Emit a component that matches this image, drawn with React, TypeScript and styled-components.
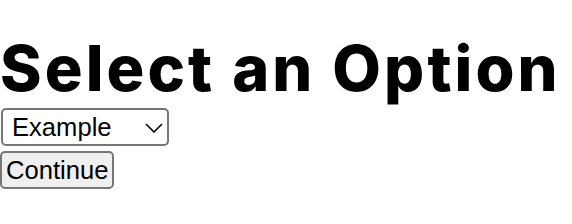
import React from 'react';
import styled, { createGlobalStyle } from 'styled-components';

const GlobalStyle = createGlobalStyle`
  html, body {
    margin: 0;
    padding: 0;
    background: #fff;
  }
`;

const Page = styled.div`
  display: flex;
  flex-direction: column;
  align-items: flex-start;
  padding-top: 36px;
`;

const Title = styled.h1`
  margin: 0 0 8px;
  font-family: Inter, "Liberation Sans", sans-serif;
  font-weight: 800;
  font-size: 63px;
  line-height: 64px;
  letter-spacing: 3.1px;
  color: #000;
`;

const SelectWrap = styled.div`
  position: relative;
  margin-left: 1px;
`;

const Select = styled.select`
  appearance: none;
  display: block;
  box-sizing: border-box;
  width: 168px;
  height: 38px;
  margin: 0;
  padding: 0 30px 0 9px;
  font-family: "Liberation Sans", Arial, sans-serif;
  font-size: 25.6px;
  color: #000;
  background: #fff;
  border: 2px solid #767676;
  border-radius: 5px;
`;

const Chevron = styled.svg`
  position: absolute;
  right: 5px;
  top: 14px;
  width: 20px;
  height: 11px;
  pointer-events: none;
`;

const Button = styled.button`
  margin-top: 5px;
  padding: 2px 4px;
  font-family: "Liberation Sans", Arial, sans-serif;
  font-size: 25.6px;
  line-height: 30px;
  color: #000;
  background: #efefef;
  border: 2px solid #767676;
  border-radius: 5px;
`;

export default function App() {
  return (
    <>
      <GlobalStyle />
      <Page>
        <Title>Select an Option</Title>
        <SelectWrap>
          <Select defaultValue="example">
            <option value="example">Example</option>
          </Select>
          <Chevron viewBox="0 0 20 11">
            <path d="M2 2l8 8 8-8" fill="none" stroke="#000" strokeWidth="1.6" />
          </Chevron>
        </SelectWrap>
        <Button>Continue</Button>
      </Page>
    </>
  );
}
